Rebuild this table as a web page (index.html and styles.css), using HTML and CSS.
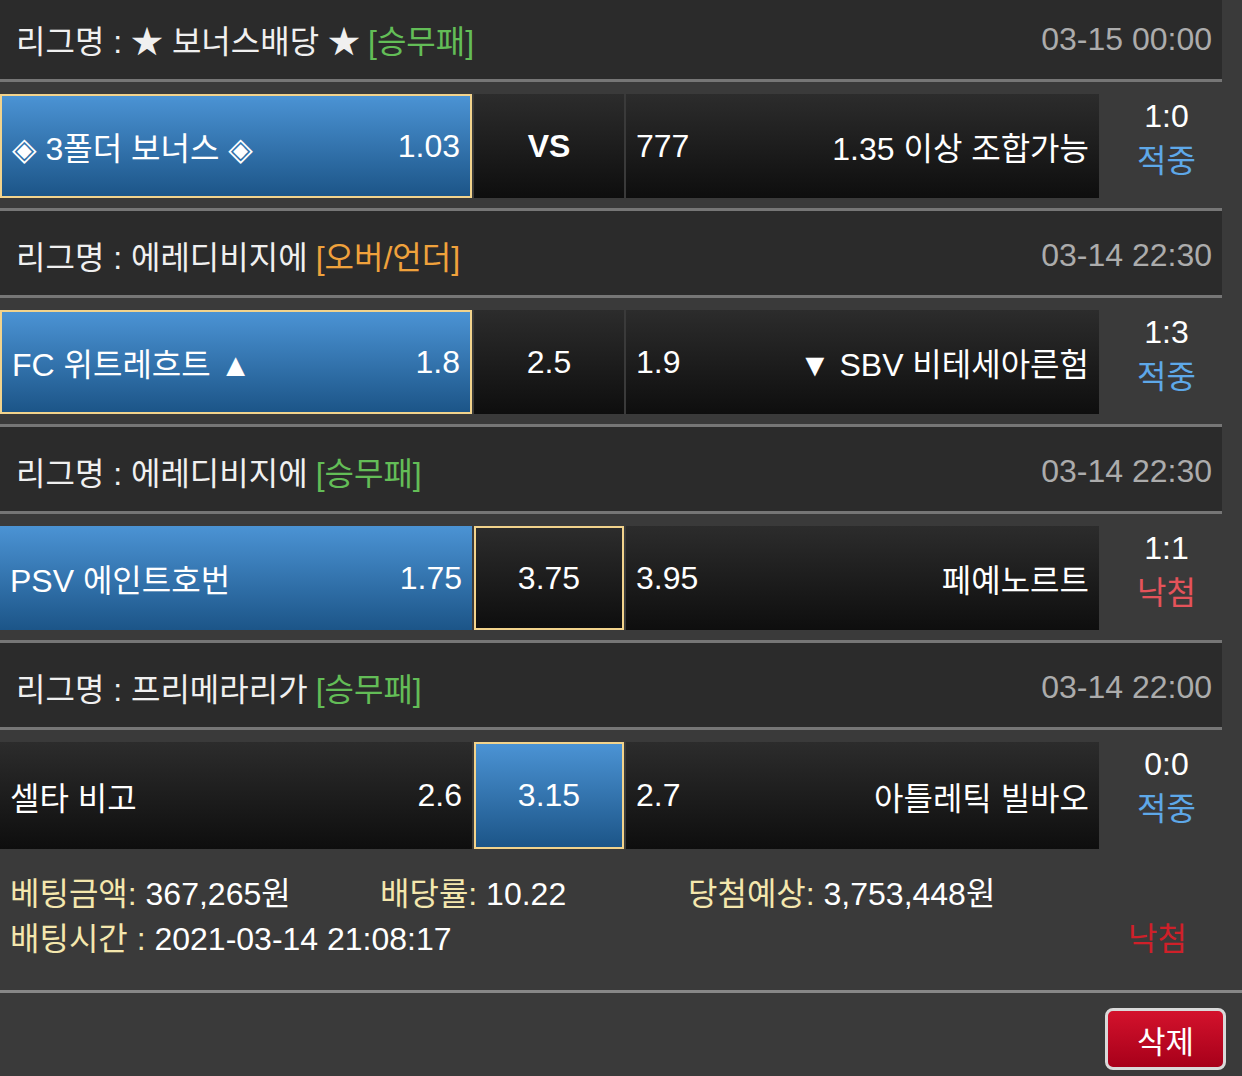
FILE: index.html
```html
<!DOCTYPE html>
<html lang="ko">
<head>
  <meta charset="UTF-8">
  <meta name="viewport" content="width=device-width, initial-scale=1.0">
  <title>배팅내역</title>
  <link rel="stylesheet" href="styles.css">
</head>
<body>
  <div class="bet-list">
    <div class="game">
      <div class="league">
        <span class="league-name">리그명 : ★ 보너스배당 ★</span>
        <span class="type type-win">[승무패]</span>
        <span class="date">03-15 00:00</span>
      </div>
      <div class="match">
        <div class="pick home blue picked"><span>◈ 3폴더 보너스 ◈</span><span>1.03</span></div>
        <div class="pick draw vs">VS</div>
        <div class="pick away"><span>777</span><span>1.35 이상 조합가능</span></div>
        <div class="result"><span>1:0</span><span class="hit">적중</span></div>
      </div>
    </div>

    <div class="game">
      <div class="league">
        <span class="league-name">리그명 : 에레디비지에</span>
        <span class="type type-ou">[오버/언더]</span>
        <span class="date">03-14 22:30</span>
      </div>
      <div class="match">
        <div class="pick home blue picked"><span>FC 위트레흐트 ▲</span><span>1.8</span></div>
        <div class="pick draw">2.5</div>
        <div class="pick away"><span>1.9</span><span>▼ SBV 비테세아른험</span></div>
        <div class="result"><span>1:3</span><span class="hit">적중</span></div>
      </div>
    </div>

    <div class="game">
      <div class="league">
        <span class="league-name">리그명 : 에레디비지에</span>
        <span class="type type-win">[승무패]</span>
        <span class="date">03-14 22:30</span>
      </div>
      <div class="match">
        <div class="pick home blue"><span>PSV 에인트호번</span><span>1.75</span></div>
        <div class="pick draw picked">3.75</div>
        <div class="pick away"><span>3.95</span><span>페예노르트</span></div>
        <div class="result"><span>1:1</span><span class="miss">낙첨</span></div>
      </div>
    </div>

    <div class="game last">
      <div class="league">
        <span class="league-name">리그명 : 프리메라리가</span>
        <span class="type type-win">[승무패]</span>
        <span class="date">03-14 22:00</span>
      </div>
      <div class="match">
        <div class="pick home"><span>셀타 비고</span><span>2.6</span></div>
        <div class="pick draw blue picked">3.15</div>
        <div class="pick away"><span>2.7</span><span>아틀레틱 빌바오</span></div>
        <div class="result"><span>0:0</span><span class="hit">적중</span></div>
      </div>
    </div>
  </div>

  <div class="summary">
    <div class="summary-row">
      <span class="col-amount"><span class="label">베팅금액:</span> 367,265원</span>
      <span class="col-rate"><span class="label">배당률:</span> 10.22</span>
      <span><span class="label">당첨예상:</span> 3,753,448원</span>
    </div>
    <div class="summary-row spread">
      <span><span class="label">배팅시간 :</span> 2021-03-14 21:08:17</span>
      <span class="status-miss">낙첨</span>
    </div>
  </div>

  <div class="actions">
    <button class="btn-delete">삭제</button>
  </div>
</body>
</html>
```

FILE: styles.css
```css
body {
  margin: 0;
  background-color: #3a3a3a;
  color: #f2f2f2;
  font-family: "Liberation Sans", "Noto Sans CJK KR", "DejaVu Sans", sans-serif;
  font-size: 32px;
  overflow: hidden;
}

.bet-list {
  width: 1222px;
  margin-top: -5px;
}

.league {
  display: flex;
  align-items: center;
  height: 87px;
  padding: 4px 10px 0 16px;
  box-sizing: border-box;
  background-color: #2b2b2b;
  border-bottom: 3px solid #767676;
}

.league-name {
  color: #f0f0f0;
}

.type {
  margin-left: 8px;
}

.type-win {
  color: #63bd57;
}

.type-ou {
  color: #f0a23c;
}

.date {
  margin-left: auto;
  color: #acacac;
}

.match {
  display: flex;
  gap: 2px;
  height: 129px;
  padding: 12px 0 10px;
  box-sizing: border-box;
  border-bottom: 3px solid #767676;
}

.game.last .match {
  border-bottom: none;
}

.pick {
  display: flex;
  align-items: center;
  justify-content: space-between;
  padding: 0 10px;
  box-sizing: border-box;
  background: linear-gradient(to bottom, #2c2c2c, #0e0e0e);
  color: #fff;
  white-space: nowrap;
}

.home {
  width: 472px;
}

.draw {
  width: 150px;
  justify-content: center;
}

.away {
  width: 473px;
}

.blue {
  background: linear-gradient(to bottom, #4b93d4, #1c5588);
}

.picked {
  border: 2px solid #f2d38c;
}

.vs {
  font-weight: bold;
}

.result {
  flex: 1;
  display: flex;
  flex-direction: column;
  align-items: center;
  padding-left: 10px;
  line-height: 45px;
  color: #fff;
}

.hit {
  color: #5ea8e8;
}

.miss {
  color: #e5535a;
}

.summary {
  padding: 13px 0 28px 10px;
  border-bottom: 3px solid #878787;
}

.summary-row {
  display: flex;
  line-height: 45px;
  color: #fff;
}

.summary-row.spread {
  justify-content: space-between;
  padding-right: 55px;
}

.col-amount {
  width: 370px;
}

.col-rate {
  width: 308px;
}

.label {
  color: #f4e7ad;
}

.status-miss {
  color: #cf2029;
}

.actions {
  display: flex;
  justify-content: flex-end;
  padding: 15px 16px 0 0;
}

.btn-delete {
  width: 121px;
  height: 62px;
  border: 3px solid #d9d9d9;
  border-radius: 8px;
  background: linear-gradient(to bottom, #d3122c, #a7001a);
  color: #fff;
  font-family: inherit;
  font-size: 31px;
  padding: 0;
}
```
